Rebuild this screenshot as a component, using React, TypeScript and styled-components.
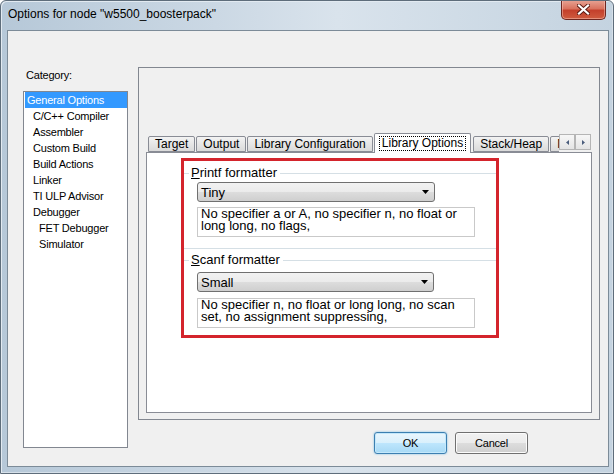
import React from 'react';
import styled, { createGlobalStyle } from 'styled-components';

const GlobalStyle = createGlobalStyle`
  html, body {
    margin: 0;
    padding: 0;
    background: #fff;
  }
  body {
    font-family: "Liberation Sans", Arial, sans-serif;
    color: #000;
  }
  * {
    box-sizing: border-box;
  }
`;

const Window = styled.div`
  width: 614px;
  height: 474px;
  display: flex;
  flex-direction: column;
  border: 1px solid #5e6d7b;
  border-radius: 6px 6px 0 0;
  overflow: hidden;
  background: linear-gradient(to right, #b6c8d8 0%, #cbd8e4 35%, #d9e3ec 55%, #c4d3e0 100%);
  box-shadow: inset 1px 1px 0 #e2eaf1, inset -1px -1px 0 #d6e0e9;
`;

const TitleBar = styled.div`
  height: 29px;
  flex: none;
  display: flex;
  justify-content: space-between;
  padding-left: 7px;
  padding-right: 7px;
`;

const Title = styled.div`
  margin-top: 6px;
  font-size: 12px;
  line-height: 14px;
  color: #000;
`;

const CloseButton = styled.div`
  width: 45px;
  height: 20px;
  margin-top: -1px;
  display: flex;
  align-items: center;
  justify-content: center;
  border: 1px solid #6e2620;
  border-top: none;
  border-radius: 0 0 5px 5px;
  background: linear-gradient(#e8a596 0%, #d9735f 45%, #c4402c 55%, #cf5b3f 100%);
  box-shadow: inset 0 0 0 1px rgba(255, 210, 200, 0.45);
`;

const Client = styled.div`
  height: 437px;
  margin: 0 4px 6px 6px;
  display: flex;
  padding-left: 15px;
  border: 1px solid #7c8b98;
  background: #f0f0f0;
`;

const LeftColumn = styled.div`
  width: 105px;
  margin-top: 38px;
  display: flex;
  flex-direction: column;
`;

const CategoryLabel = styled.div`
  height: 13px;
  margin-bottom: 9px;
  padding-left: 3px;
  font-size: 11px;
  line-height: 13px;
  letter-spacing: -0.2px;
`;

const ListBox = styled.div`
  height: 357px;
  padding: 0 0 0 1px;
  border: 1px solid #828790;
  background: #fff;
`;

const ListItem = styled.div<{ $level: number; $selected?: boolean }>`
  height: 16px;
  padding-left: ${p => 2 + p.$level * 6}px;
  font-size: 11px;
  line-height: 16px;
  letter-spacing: -0.2px;
  white-space: nowrap;
  background: ${p => (p.$selected ? '#3399ff' : 'transparent')};
  color: ${p => (p.$selected ? '#fff' : '#000')};
`;

const RightColumn = styled.div`
  width: 462px;
  margin-left: 10px;
  margin-top: 36px;
  display: flex;
  flex-direction: column;
`;

const Panel = styled.div`
  height: 353px;
  padding: 65px 7px 6px 7px;
  border: 1px solid #828790;
  display: flex;
  flex-direction: column;
`;

const TabStrip = styled.div`
  height: 19px;
  display: flex;
  position: relative;
  z-index: 1;
`;

const TabList = styled.div`
  flex: 1;
  height: 20px;
  margin-bottom: -1px;
  padding-left: 2px;
  display: flex;
  align-items: flex-start;
  overflow: hidden;
`;

const Tab = styled.div<{ $active?: boolean }>`
  flex: none;
  height: ${p => (p.$active ? 20 : 16)}px;
  margin-top: ${p => (p.$active ? 0 : 3)}px;
  margin-right: ${p => (p.$active ? 2 : 1)}px;
  padding: ${p => (p.$active ? '0 5px' : '0 6px')};
  display: flex;
  align-items: center;
  font-size: 12px;
  white-space: nowrap;
  border: 1px solid #898c95;
  border-bottom: ${p => (p.$active ? 'none' : '1px solid #898c95')};
  border-radius: 2px 2px 0 0;
  background: ${p => (p.$active ? '#fff' : 'linear-gradient(#f3f3f3, #e6e6e6 50%, #dadada)')};
`;

const FocusText = styled.span`
  padding: 0 2px;
  line-height: 13px;
  outline: 1px dotted #000;
`;

const ScrollArrows = styled.div`
  flex: none;
  display: flex;
  margin: 1px 1px 0 0;
  height: 16px;
`;

const ArrowButton = styled.div`
  width: 16px;
  height: 16px;
  display: flex;
  align-items: center;
  justify-content: center;
  border: 1px solid #b5b5b5;
  background: linear-gradient(#f7f7f7, #e4e4e4);
`;

const TabPage = styled.div`
  height: 261px;
  padding: 5px 0 0 34px;
  border: 1px solid #898c95;
  background: #fff;
`;

const Highlight = styled.div`
  width: 318px;
  height: 180px;
  padding-top: 5px;
  border: 3px solid #d4242c;
  display: flex;
  flex-direction: column;
`;

const GroupHeader = styled.div<{ $gap: number }>`
  height: 14px;
  margin-top: ${p => p.$gap}px;
  display: flex;
  align-items: center;
  font-size: 13px;
  line-height: 14px;
  &::before {
    content: '';
    width: 5px;
    height: 1px;
    background: #d5dfe5;
  }
  &::after {
    content: '';
    flex: 1;
    height: 1px;
    margin-left: 1px;
    background: #d5dfe5;
  }
`;

const GroupLabel = styled.span`
  padding: 0 2px;
  white-space: nowrap;
`;

const Separator = styled.div`
  height: 1px;
  margin-top: 11px;
  background: #d5dfe5;
`;

const ComboBox = styled.div<{ $width: number; $gap: number }>`
  width: ${p => p.$width}px;
  height: 20px;
  margin: ${p => p.$gap}px 0 0 13px;
  padding: 0 5px 0 3px;
  display: flex;
  align-items: center;
  justify-content: space-between;
  font-size: 13px;
  border: 1px solid #707070;
  border-radius: 3px;
  background: linear-gradient(#f2f2f2 0%, #ebebeb 50%, #dddddd 50%, #cfcfcf 100%);
`;

const InfoBox = styled.div<{ $gap: number }>`
  width: 278px;
  height: 30px;
  margin: ${p => p.$gap}px 0 0 13px;
  padding: 0 3px;
  font-size: 13px;
  line-height: 12px;
  border: 1px solid #c9c9c9;
  background: #fff;
`;

const ButtonRow = styled.div`
  margin-top: 12px;
  padding-right: 72px;
  display: flex;
  justify-content: flex-end;
  gap: 8px;
`;

const DialogButton = styled.div<{ $default?: boolean }>`
  width: 73px;
  height: 22px;
  display: flex;
  align-items: center;
  justify-content: center;
  font-size: 11px;
  letter-spacing: -0.2px;
  border-radius: 3px;
  border: 1px solid ${p => (p.$default ? '#3c7fb1' : '#707070')};
  background: ${p =>
    p.$default
      ? 'linear-gradient(#eaf6fd 0%, #d9f0fc 50%, #bee6fd 50%, #a7d9f5 100%)'
      : 'linear-gradient(#f2f2f2 0%, #ebebeb 50%, #dddddd 50%, #cfcfcf 100%)'};
  box-shadow: ${p => (p.$default ? 'inset 0 0 0 1px #c4e8fb, 0 0 2px #6cb5e0' : 'inset 0 0 0 1px #fbfbfb')};
`;

const categories = [
  { label: 'General Options', level: 0, selected: true },
  { label: 'C/C++ Compiler', level: 1 },
  { label: 'Assembler', level: 1 },
  { label: 'Custom Build', level: 1 },
  { label: 'Build Actions', level: 1 },
  { label: 'Linker', level: 1 },
  { label: 'TI ULP Advisor', level: 1 },
  { label: 'Debugger', level: 1 },
  { label: 'FET Debugger', level: 2 },
  { label: 'Simulator', level: 2 },
];

const tabs = ['Target', 'Output', 'Library Configuration', 'Library Options', 'Stack/Heap', 'MISRA-C:2004'];

const DropArrow = () => (
  <svg width="7" height="4" viewBox="0 0 7 4">
    <path d="M0 0h7L3.5 4z" fill="#000" />
  </svg>
);

export default function App() {
  return (
    <>
      <GlobalStyle />
      <Window>
        <TitleBar>
          <Title>Options for node "w5500_boosterpack"</Title>
          <CloseButton>
            <svg width="13" height="11" viewBox="0 0 13 11">
              <path d="M2 1.5l9 8M11 1.5l-9 8" stroke="#5a1a12" strokeWidth="4" strokeLinecap="square" />
              <path d="M2 1.5l9 8M11 1.5l-9 8" stroke="#fff" strokeWidth="2.2" strokeLinecap="square" />
            </svg>
          </CloseButton>
        </TitleBar>

        <Client>
          <LeftColumn>
            <CategoryLabel>Category:</CategoryLabel>
            <ListBox>
              {categories.map(c => (
                <ListItem key={c.label} $level={c.level} $selected={c.selected}>
                  {c.label}
                </ListItem>
              ))}
            </ListBox>
          </LeftColumn>

          <RightColumn>
            <Panel>
              <TabStrip>
                <TabList>
                  {tabs.map(t =>
                    t === 'Library Options' ? (
                      <Tab key={t} $active>
                        <FocusText>{t}</FocusText>
                      </Tab>
                    ) : (
                      <Tab key={t}>{t}</Tab>
                    )
                  )}
                </TabList>
                <ScrollArrows>
                  <ArrowButton>
                    <svg width="3" height="5" viewBox="0 0 3 5">
                      <path d="M3 0v5L0 2.5z" fill="#4b5d7c" />
                    </svg>
                  </ArrowButton>
                  <ArrowButton>
                    <svg width="3" height="5" viewBox="0 0 3 5">
                      <path d="M0 0v5L3 2.5z" fill="#4b5d7c" />
                    </svg>
                  </ArrowButton>
                </ScrollArrows>
              </TabStrip>

              <TabPage>
                <Highlight>
                  <GroupHeader $gap={0}>
                    <GroupLabel>
                      <u>P</u>rintf formatter
                    </GroupLabel>
                  </GroupHeader>
                  <ComboBox $width={238} $gap={2}>
                    <span>Tiny</span>
                    <DropArrow />
                  </ComboBox>
                  <InfoBox $gap={5}>
                    No specifier a or A, no specifier n, no float or long long, no flags,
                  </InfoBox>
                  <Separator />
                  <GroupHeader $gap={4}>
                    <GroupLabel>
                      <u>S</u>canf formatter
                    </GroupLabel>
                  </GroupHeader>
                  <ComboBox $width={237} $gap={5}>
                    <span>Small</span>
                    <DropArrow />
                  </ComboBox>
                  <InfoBox $gap={6}>
                    No specifier n, no float or long long, no scan set, no assignment suppressing,
                  </InfoBox>
                </Highlight>
              </TabPage>
            </Panel>

            <ButtonRow>
              <DialogButton $default>OK</DialogButton>
              <DialogButton>Cancel</DialogButton>
            </ButtonRow>
          </RightColumn>
        </Client>
      </Window>
    </>
  );
}
